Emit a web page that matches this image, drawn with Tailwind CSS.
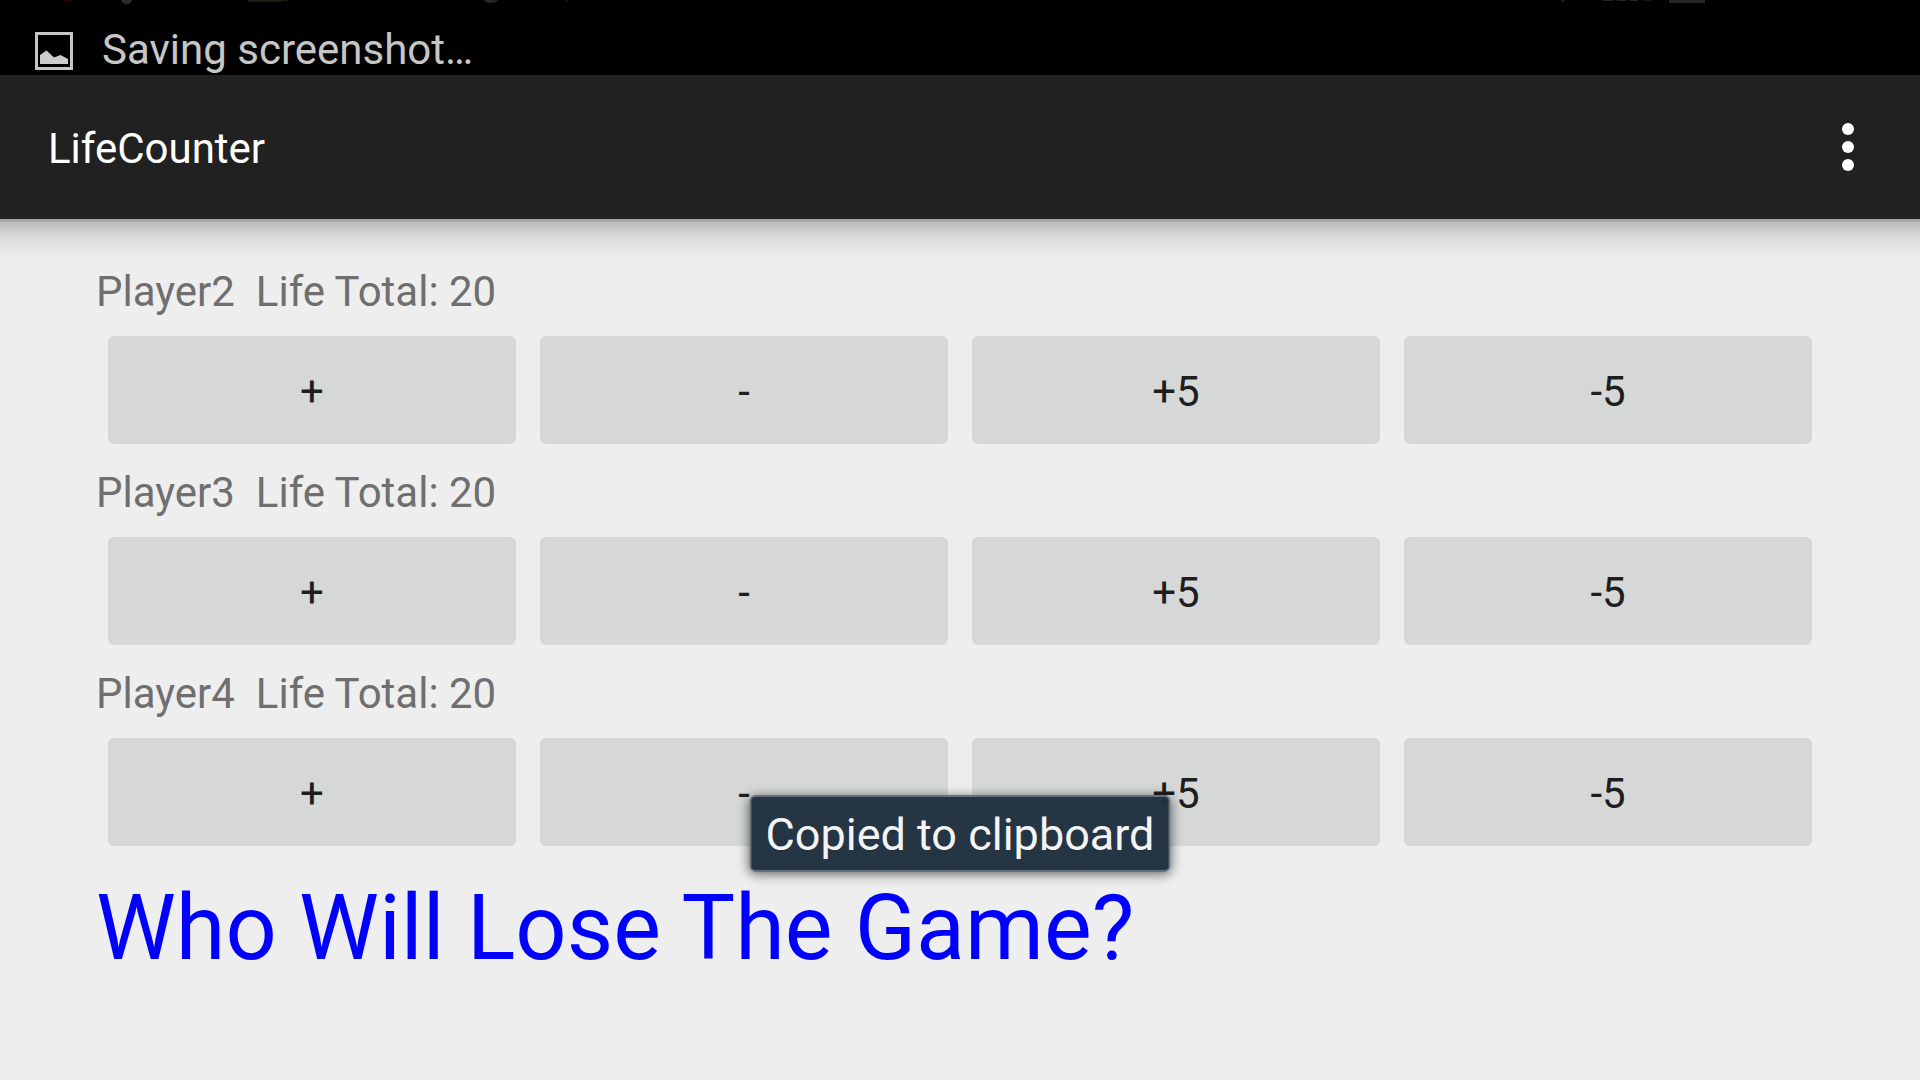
<!DOCTYPE html>
<html lang="en">
<head>
<meta charset="utf-8">
<meta name="viewport" content="width=device-width, initial-scale=1">
<title>LifeCounter</title>
<script src="https://cdn.jsdelivr.net/npm/@tailwindcss/browser@4"></script>
</head>
<body class="relative min-h-screen overflow-x-hidden bg-[#eeeeee] font-[Roboto,sans-serif] text-[42px] leading-[50px]">
<div class="relative flex h-[75px] items-end overflow-hidden bg-black pl-[35px] text-[#c6c6c6]" role="status">
  <!-- Status icons scrolling out above the ticker -->
  <svg class="absolute top-0 left-0 h-1 w-[600px]" viewBox="0 0 600 4" aria-hidden="true">
    <path d="M62 0H74L70 1H66Z" fill="#420000"/>
    <path d="M121 0H132Q131 4 127 4Q122 4 121 0Z" fill="#2b2b2b"/>
    <path d="M247 0H288V1H282V2H248Z" fill="#1f1a0c"/>
    <path d="M484 0H498Q496 3 490 3Q485 3 484 0Z" fill="#262626"/>
    <path d="M566 0H569L567 1Z" fill="#262626"/>
  </svg>
  <svg class="absolute top-0 right-[210px] h-1 w-[150px]" viewBox="0 0 150 4" aria-hidden="true">
    <path d="M0 0H6L3 3Z" fill="#1a1a1a"/>
    <path d="M43 0H53V1H43ZM57 0H66V1H57ZM70 0H78V1H70Z" fill="#262626"/>
    <path d="M83 0H91V1H83Z" fill="#141414"/>
    <path d="M109 0H145V3H109Z" fill="#262626"/>
  </svg>
  <svg class="mb-[5px] h-[38px] w-[38px] shrink-0" viewBox="0 0 38 38" aria-hidden="true">
    <rect x="1.500" y="1.500" width="35" height="35" fill="none" stroke="#c6c6c6" stroke-width="3"/>
    <path d="M5 32V23L11.500 18.500L19 25.500L25.500 23L33 27V32Z" fill="#cccccc"/>
  </svg>
  <span class="ml-[29px]">Saving screenshot…</span>
</div>
<header class="relative flex h-36 items-center justify-between bg-[#212121] px-12 text-white">
  <h1 class="pt-1">LifeCounter</h1>
  <button type="button" aria-label="More options" class="flex w-12 justify-center">
    <svg class="h-12 w-3" viewBox="0 0 12 48" fill="#fff" aria-hidden="true"><circle cx="6" cy="6" r="6"/><circle cx="6" cy="24" r="6"/><circle cx="6" cy="42" r="6"/></svg>
  </button>
  <div class="absolute inset-x-0 top-full h-[39px] border-t-[3px] border-[#a6a6a6] bg-linear-to-b from-[#bababa] via-[#dadada] via-40% to-[#eeeeee]"></div>
</header>
<main class="px-24 pt-12">
  <section class="mb-6">
    <p class="mb-[19px] whitespace-pre text-[#6f6f6f]">Player2  Life Total: 20</p>
    <div class="grid grid-cols-4 gap-6 px-3 text-[#1e1e1e]">
      <button type="button" class="h-[108px] rounded-md bg-[#d6d8d7] pt-1">+</button>
      <button type="button" class="h-[108px] rounded-md bg-[#d6d8d7] pt-1">-</button>
      <button type="button" class="h-[108px] rounded-md bg-[#d6d8d7] pt-1">+5</button>
      <button type="button" class="h-[108px] rounded-md bg-[#d6d8d7] pt-1">-5</button>
    </div>
  </section>
  <section class="mb-6">
    <p class="mb-[19px] whitespace-pre text-[#6f6f6f]">Player3  Life Total: 20</p>
    <div class="grid grid-cols-4 gap-6 px-3 text-[#1e1e1e]">
      <button type="button" class="h-[108px] rounded-md bg-[#d6d8d7] pt-1">+</button>
      <button type="button" class="h-[108px] rounded-md bg-[#d6d8d7] pt-1">-</button>
      <button type="button" class="h-[108px] rounded-md bg-[#d6d8d7] pt-1">+5</button>
      <button type="button" class="h-[108px] rounded-md bg-[#d6d8d7] pt-1">-5</button>
    </div>
  </section>
  <section class="mb-6">
    <p class="mb-[19px] whitespace-pre text-[#6f6f6f]">Player4  Life Total: 20</p>
    <div class="grid grid-cols-4 gap-6 px-3 text-[#1e1e1e]">
      <button type="button" class="h-[108px] rounded-md bg-[#d6d8d7] pt-1">+</button>
      <button type="button" class="h-[108px] rounded-md bg-[#d6d8d7] pt-1">-</button>
      <button type="button" class="h-[108px] rounded-md bg-[#d6d8d7] pt-1">+5</button>
      <button type="button" class="h-[108px] rounded-md bg-[#d6d8d7] pt-1">-5</button>
    </div>
  </section>
  <p class="pt-[6px] text-[90px] leading-[106px] text-[#0000ff]">Who Will Lose The Game?</p>
</main>
<div role="alert" class="absolute bottom-[208px] left-1/2 -translate-x-1/2 rounded-md border-2 border-[#66717b] bg-[#213140]/98 px-[14px] pt-[13px] pb-[10px] text-[45px] leading-[50px] whitespace-nowrap text-[#f4f4f4] shadow-[0_2px_12px_rgba(0,0,0,0.6)]">Copied to clipboard</div>
</body>
</html>
